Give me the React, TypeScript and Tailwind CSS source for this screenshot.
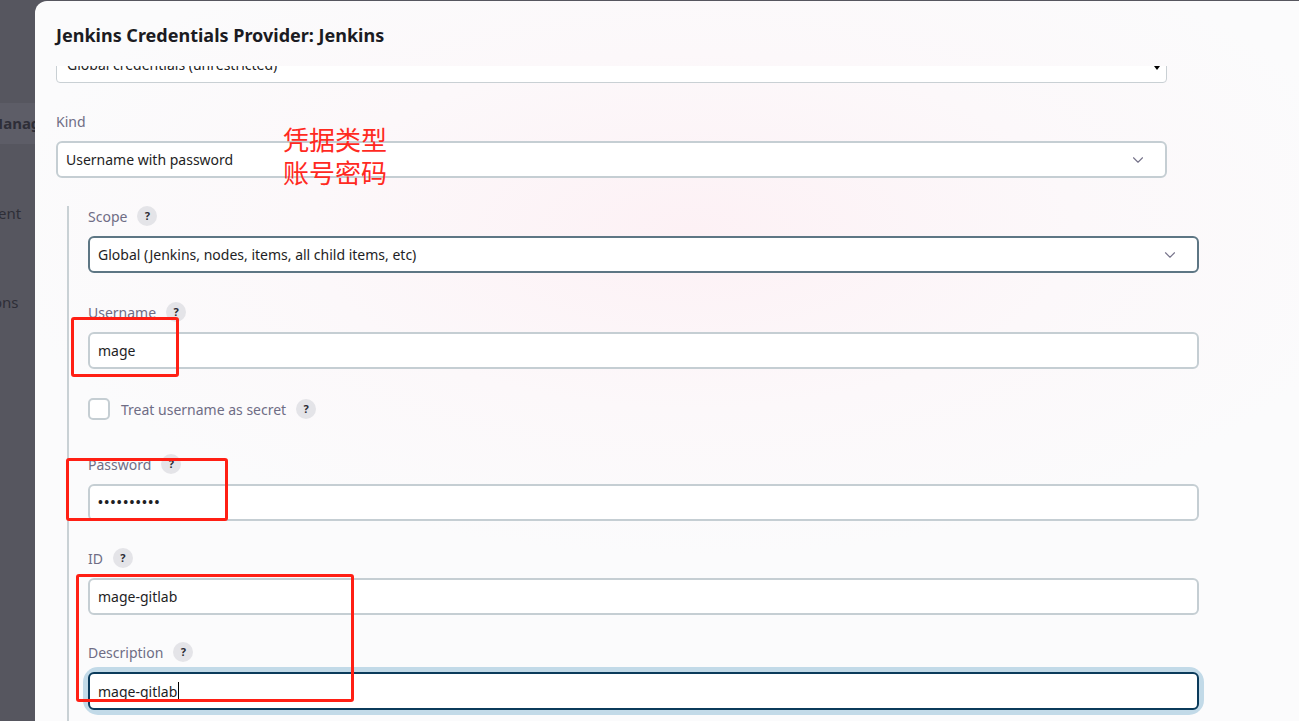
import React from "react";
import { ChevronDown } from "lucide-react";

const font = { fontFamily: '"Noto Sans", "Noto Sans CJK SC", sans-serif' };

function Help() {
  return (
    <span className="ml-[10px] inline-flex h-[20px] w-[20px] items-center justify-center rounded-full bg-[#e4e4e8] text-[11px] font-bold text-[#2b2b33]">
      ?
    </span>
  );
}

function Label({ text, help = true }: { text: string; help?: boolean }) {
  return (
    <div className="mb-[10px] flex h-[20px] items-center text-[14px] text-[#6f6d85]">
      <span>{text}</span>
      {help && <Help />}
    </div>
  );
}

function Select({ text, dark = false }: { text: string; dark?: boolean }) {
  return (
    <div
      className={`flex h-[37px] w-[1111px] items-center justify-between rounded-[6px] border-2 bg-white pl-[8px] pr-[18px] text-[14px] text-[#1e1e24] ${
        dark ? "border-[#5d7684]" : "border-[#c5ced3]"
      }`}
    >
      <span>{text}</span>
      <ChevronDown size={18} strokeWidth={1.5} className="text-[#76738a]" />
    </div>
  );
}

function Input({ children }: { children: React.ReactNode }) {
  return (
    <div className="flex h-[37px] w-[1111px] items-center rounded-[6px] border-2 border-[#c5ced3] bg-white pl-[8px] text-[14px] text-[#1e1e24]">
      {children}
    </div>
  );
}

export default function App() {
  return (
    <div className="relative flex h-[721px] w-[1299px] overflow-hidden bg-[#56565f]" style={font}>
      {/* sidebar behind overlay */}
      <div className="w-[35px] shrink-0 overflow-hidden text-[15px] text-[#2e2e37]">
        <div className="mt-[103px] flex h-[41px] items-center bg-[#5d5d67] font-bold">
          <span className="ml-[-11px] whitespace-nowrap">Manage Jenkins</span>
        </div>
        <div className="mt-[48px] flex h-[42px] items-center">
          <span className="ml-[-2px] whitespace-nowrap">ent</span>
        </div>
        <div className="mt-[47px] flex h-[42px] items-center">
          <span className="ml-[-7px] whitespace-nowrap">ons</span>
        </div>
      </div>

      {/* dialog */}
      <div className="mt-[1px] flex min-w-0 flex-1 flex-col overflow-hidden rounded-tl-[12px] bg-[radial-gradient(ellipse_55%_45%_at_52%_32%,#fdf1f5_0%,#fcf8fa_55%,#fbfbfc_100%)]">
        <div className="relative z-10 flex h-[65px] shrink-0 items-center pl-[21px] pt-[3px] text-[18px] font-bold text-[#1b1b22]">
          <span>Jenkins Credentials Provider: Jenkins</span>
        </div>
        <div className="relative min-h-0 flex-1 overflow-hidden pl-[21px]">
          <div className="mt-[-20px] mb-[28px] flex h-[37px] w-[1111px] items-center justify-between rounded-[4px] border border-[#c9d0d4] bg-white pl-[10px] pr-[6px] text-[14px] text-[#1e1e24]">
            <span>Global credentials (unrestricted)</span>
            <span className="mt-[6px] h-0 w-0 border-x-[3px] border-t-[4px] border-x-transparent border-t-black" />
          </div>

          <Label text="Kind" help={false} />
          <div className="mb-[28px]">
            <Select text="Username with password" />
          </div>

          <div className="ml-[11px] border-l-2 border-[#c9d1d5] pl-[19px] pb-[12px]">
            <Label text="Scope" />
            <div className="mb-[29px]">
              <Select text="Global (Jenkins, nodes, items, all child items, etc)" dark />
            </div>

            <Label text="Username" />
            <div className="mb-[29px]">
              <Input>mage</Input>
            </div>

            <div className="mb-[34px] flex h-[22px] items-center text-[14px] text-[#6f6d85]">
              <span className="h-[22px] w-[22px] rounded-[5px] border-2 border-[#c5ced3] bg-white" />
              <span className="ml-[11px]">Treat username as secret</span>
              <Help />
            </div>

            <Label text="Password" />
            <div className="mb-[27px]">
              <Input>
                <span className="text-[13px] font-bold tracking-[1.4px]">••••••••••</span>
              </Input>
            </div>

            <Label text="ID" />
            <div className="mb-[27px]">
              <Input>mage-gitlab</Input>
            </div>

            <Label text="Description" />
            <div className="w-fit rounded-[10px] shadow-[0_0_0_5px_#c2dae8]">
              <div className="flex h-[38px] w-[1111px] items-center rounded-[6px] border-2 border-[#0b3b5b] bg-white pl-[8px] text-[14px] text-[#1e1e24]">
                <span>mage-gitlab</span>
                <span className="ml-[1px] h-[18px] w-[1px] bg-black" />
              </div>
            </div>
          </div>
        </div>
      </div>

      {/* annotations */}
      <div className="pointer-events-none absolute left-[283px] top-[122px] text-[26px] leading-[33px] text-[#ff2a1f]" style={{ fontFamily: '"Noto Sans CJK SC", sans-serif' }}>
        <div>凭据类型</div>
        <div>账号密码</div>
      </div>
      <div className="pointer-events-none absolute left-[71px] top-[317px] h-[60px] w-[108px] rounded-[3px] border-[3px] border-[#ff1f14]" />
      <div className="pointer-events-none absolute left-[66px] top-[458px] h-[63px] w-[162px] rounded-[3px] border-[3px] border-[#ff1f14]" />
      <div className="pointer-events-none absolute left-[76px] top-[574px] h-[128px] w-[278px] rounded-[3px] border-[3px] border-[#ff1f14]" />
    </div>
  );
}
